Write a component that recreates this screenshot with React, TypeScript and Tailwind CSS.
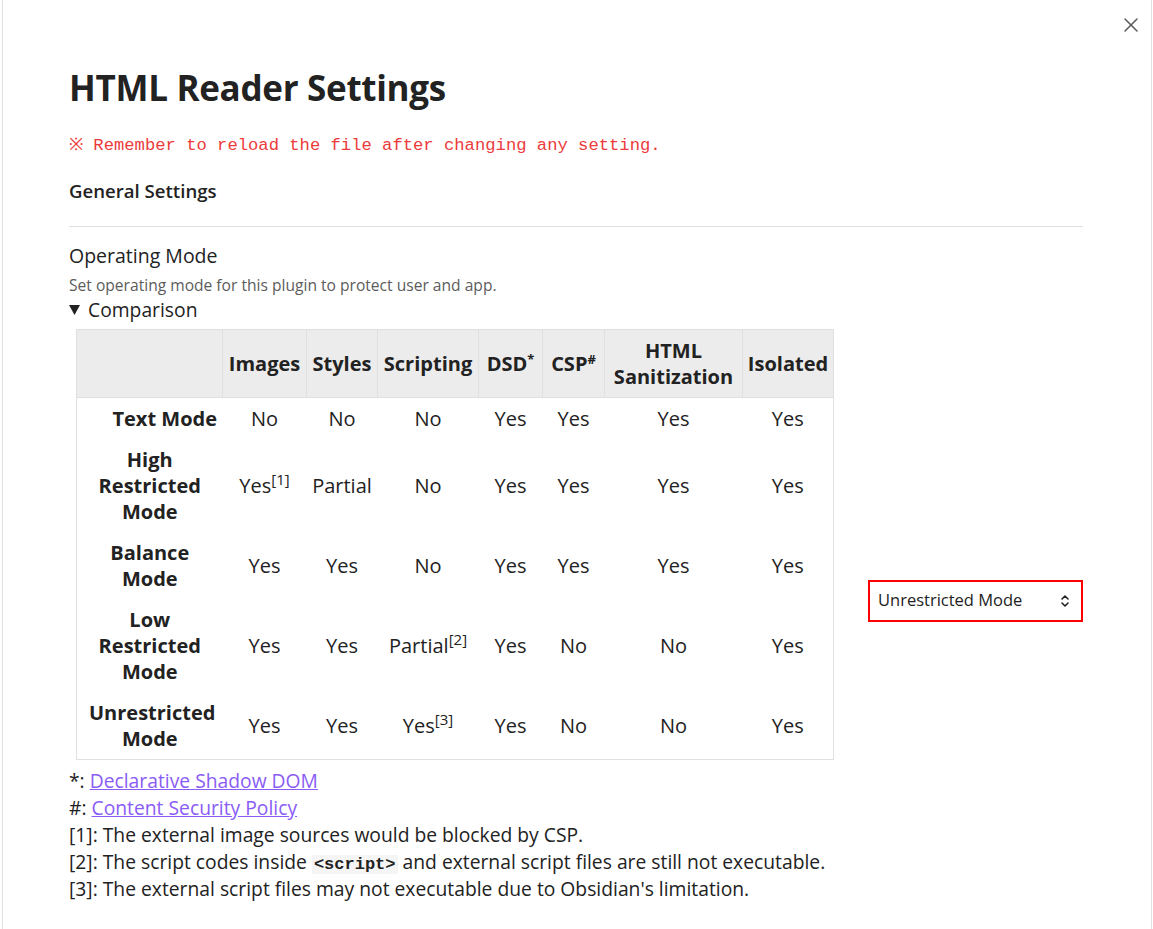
import { X } from "lucide-react";

const rows = [
  { mode: "Text Mode", cells: ["No", "No", "No", "Yes", "Yes", "Yes", "Yes"] },
  { mode: "High Restricted Mode", cells: ["Yes|1", "Partial", "No", "Yes", "Yes", "Yes", "Yes"] },
  { mode: "Balance Mode", cells: ["Yes", "Yes", "No", "Yes", "Yes", "Yes", "Yes"] },
  { mode: "Low Restricted Mode", cells: ["Yes", "Yes", "Partial|2", "Yes", "No", "No", "Yes"] },
  { mode: "Unrestricted Mode", cells: ["Yes", "Yes", "Yes|3", "Yes", "No", "No", "Yes"] },
];

const headers = ["Images", "Styles", "Scripting", "DSD*", "CSP#", "HTML Sanitization", "Isolated"];
const widths = [146, 84, 71, 101, 64, 62, 138, 91];

function Cell({ value }: { value: string }) {
  const [text, note] = value.split("|");
  return (
    <td className="px-1 py-[7.5px] text-center">
      {text}
      {note && <sup className="text-[15px]">[{note}]</sup>}
    </td>
  );
}

function HeaderCell({ label }: { label: string }) {
  const mark = label.endsWith("*") || label.endsWith("#") ? label.slice(-1) : null;
  const text = mark ? label.slice(0, -1) : label;
  return (
    <th className="border border-[#e0e0e0] px-1 py-[7.5px] font-bold">
      {text}
      {mark && <sup className="text-[13px]">{mark}</sup>}
    </th>
  );
}

function ChevronsUpDown() {
  return (
    <svg width="12" height="14" viewBox="0 0 12 14" fill="none" stroke="#222" strokeWidth="1.6" strokeLinecap="round" strokeLinejoin="round">
      <path d="M3 5l3-3 3 3" />
      <path d="M3 9l3 3 3-3" />
    </svg>
  );
}

export default function App() {
  return (
    <div className="w-[1153px] h-[929px] bg-white overflow-hidden text-[#222]" style={{ fontFamily: '"Open Sans", "Noto Sans", sans-serif' }}>
      <div className="relative ml-[2px] w-[1150px] h-[929px] overflow-hidden border-x border-[#e0e0e0] pl-[66px] pr-[68px]">
        {/* Close */}
        <button className="absolute right-[8px] top-[13px] text-[#5a5a5a]">
          <X size={24} strokeWidth={1.5} />
        </button>

        <h1 className="pt-[64px] text-[35px] font-bold leading-[48px] tracking-[-0.3px]">HTML Reader Settings</h1>

        <p className="mt-[22px] text-[17.2px] leading-[24px] text-[#ec3b3b]" style={{ fontFamily: '"Liberation Mono", monospace' }}>
          ※ Remember to reload the file after changing any setting.
        </p>

        {/* Heading */}
        <div className="pt-[18px] pb-[20px] text-[18.6px] font-semibold leading-[30px]">General Settings</div>

        {/* Setting item */}
        <div className="flex items-center border-t border-[#e0e0e0] pt-[14px]">
          <div className="min-w-0 flex-1 pb-[59px] whitespace-nowrap">
            <div className="text-[19.5px] leading-[30px]">Operating Mode</div>
            <div className="mt-[4px] text-[15.6px] leading-[20px] text-[#5c5c5c]">Set operating mode for this plugin to protect user and app.</div>
            <div className="mt-[1px] flex items-center gap-[8px] text-[19.3px] leading-[28px]">
              <svg width="11" height="10" viewBox="0 0 11 10">
                <path d="M0 0h11L5.5 10z" fill="#222" />
              </svg>
              <span>Comparison</span>
            </div>

            <table className="ml-[7px] mt-[5px] w-[757px] table-fixed border-collapse border border-[#e0e0e0] text-[20px] leading-[26px] whitespace-normal">
              <colgroup>
                {widths.map((w, i) => (
                  <col key={i} style={{ width: w }} />
                ))}
              </colgroup>
              <thead>
                <tr className="bg-[#ececec]">
                  <th className="border border-[#e0e0e0]"></th>
                  {headers.map((h) => (
                    <HeaderCell key={h} label={h} />
                  ))}
                </tr>
              </thead>
              <tbody>
                {rows.map((r, idx) => (
                  <tr key={r.mode}>
                    <th className={idx === 0 ? "whitespace-nowrap pl-[30px] pr-0 py-[7.5px] font-bold" : "px-3 py-[7.5px] font-bold"}>{r.mode}</th>
                    {r.cells.map((c, i) => (
                      <Cell key={i} value={c} />
                    ))}
                  </tr>
                ))}
              </tbody>
            </table>

            <div className="mt-[6.5px] text-[19.3px] leading-[27px]">
              <div>
                *: <a className="text-[#8a5cf5] underline">Declarative Shadow DOM</a>
              </div>
              <div>
                #: <a className="text-[#8a5cf5] underline">Content Security Policy</a>
              </div>
              <div>[1]: The external image sources would be blocked by CSP.</div>
              <div>
                [2]: The script codes inside{" "}
                <code className="bg-[#f5f5f5] px-[2px] text-[17px] font-bold leading-none" style={{ fontFamily: '"Liberation Mono", monospace' }}>
                  &lt;script&gt;
                </code>{" "}
                and external script files are still not executable.
              </div>
              <div>[3]: The external script files may not executable due to Obsidian's limitation.</div>
            </div>
          </div>

          <div className="ml-[20px] flex h-[42px] w-[215px] shrink-0 items-center justify-between border-2 border-[#ff0000] bg-white pl-[8px] pr-[10px] text-[16.5px]">
            <span>Unrestricted Mode</span>
            <ChevronsUpDown />
          </div>
        </div>
      </div>
    </div>
  );
}
